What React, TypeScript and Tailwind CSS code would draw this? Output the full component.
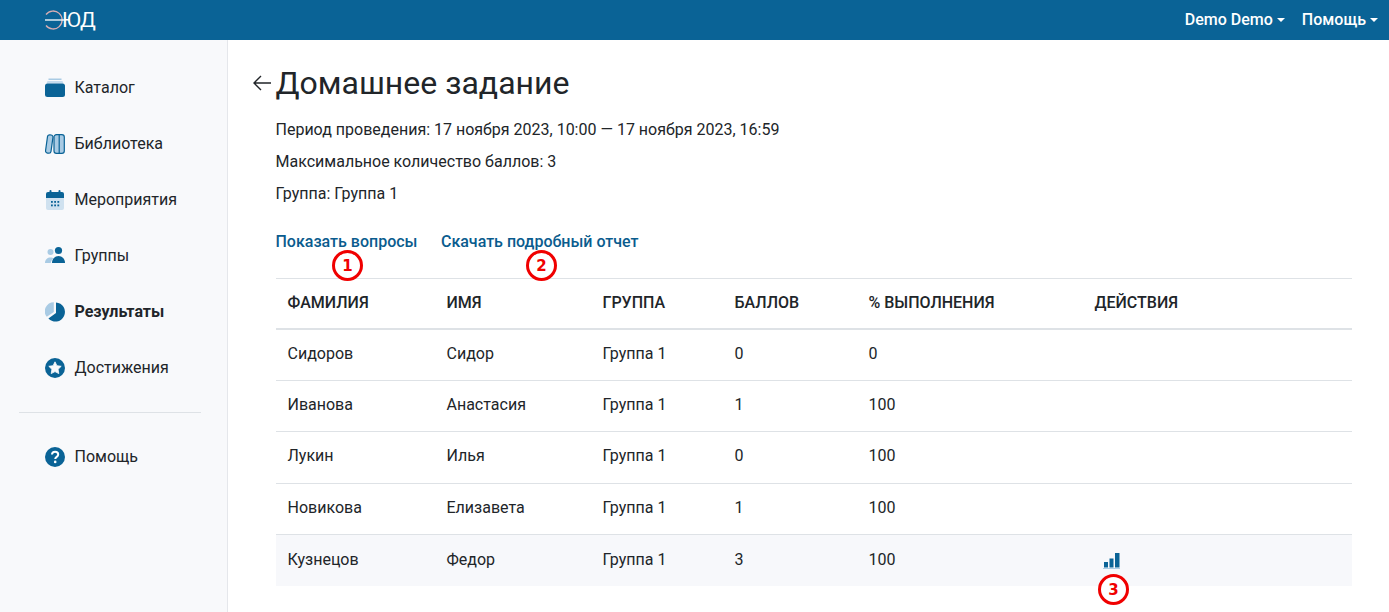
import React from "react";

const blue = "#0a6396";
const light = "#a9cbe4";

const Catalog = () => (
  <svg width="20" height="20" viewBox="0 0 20 20">
    <rect x="3.5" y="0.5" width="13" height="1.5" fill={light} />
    <path d="M2.5 3h15l1 2.5h-17z" fill="#c5dcee" />
    <rect x="0" y="5.5" width="20" height="13.5" rx="2.5" fill={blue} />
  </svg>
);
const Library = () => (
  <svg width="20" height="20" viewBox="0 0 20 20">
    <rect x="1.5" y="0.8" width="5.5" height="18.4" rx="2.2" transform="rotate(8 4.2 10)" fill={light} stroke={blue} strokeWidth="1.2" />
    <rect x="9" y="0.7" width="10.3" height="18.6" rx="2.4" fill={light} stroke={blue} strokeWidth="1.2" />
    <rect x="13.6" y="0.7" width="1.2" height="18.6" fill={blue} />
  </svg>
);
const Calendar = () => (
  <svg width="20" height="20" viewBox="0 0 20 20">
    <rect x="1" y="5" width="18" height="15" rx="2" fill="#cfe1ef" />
    <path d="M1 8V4a2 2 0 0 1 2-2h14a2 2 0 0 1 2 2v4z" fill={blue} />
    <rect x="4.5" y="0" width="2" height="3.5" rx="1" fill={blue} />
    <rect x="13.5" y="0" width="2" height="3.5" rx="1" fill={blue} />
    {[6, 9.2, 12.4].map((x) =>
      [11, 14.5].map((y) => <rect key={`${x}-${y}`} x={x} y={y} width="1.8" height="1.8" fill={blue} />),
    )}
  </svg>
);
const Groups = () => (
  <svg width="20" height="20" viewBox="0 0 20 20">
    <circle cx="5.5" cy="6" r="3" fill={light} />
    <path d="M0 17c0-3.5 2.5-5.5 5.5-5.5 1.5 0 2.5.4 3 1-1.5 1-2.5 2.5-2.7 4.5z" fill={light} />
    <circle cx="13.5" cy="4.5" r="3.6" fill={blue} />
    <path d="M7 17c0-4 2.8-7 6.5-7s6.5 3 6.5 7z" fill={blue} />
  </svg>
);
const Results = () => (
  <svg width="20" height="20" viewBox="0 0 20 20">
    <path d="M8.8 0.2A9 9 0 0 0 1.8 14.8L8.8 10z" fill={light} />
    <path d="M11 0.4A9.6 9.6 0 1 1 3.4 16.6L11 11z" fill={blue} />
  </svg>
);
const Achievements = () => (
  <svg width="20" height="20" viewBox="0 0 20 20">
    <circle cx="10" cy="10" r="10" fill={blue} />
    <path d="M10 3.8l1.9 3.9 4.3.6-3.1 3 .7 4.3-3.8-2-3.8 2 .7-4.3-3.1-3 4.3-.6z" fill="#f8f9fb" stroke="#f8f9fb" strokeWidth="0.8" strokeLinejoin="round" />
  </svg>
);
const Help = () => (
  <svg width="20" height="20" viewBox="0 0 20 20">
    <circle cx="10" cy="10" r="10" fill={blue} />
    <path d="M7 7.6C7 5.8 8.4 4.8 10.1 4.8c1.8 0 3.1 1.1 3.1 2.7 0 2.4-3 2.3-3 4.6" fill="none" stroke="#fff" strokeWidth="2" />
    <circle cx="10.2" cy="14.9" r="1.3" fill="#fff" />
  </svg>
);

const nav = [
  { label: "Каталог", icon: <Catalog /> },
  { label: "Библиотека", icon: <Library /> },
  { label: "Мероприятия", icon: <Calendar /> },
  { label: "Группы", icon: <Groups /> },
  { label: "Результаты", icon: <Results />, active: true },
  { label: "Достижения", icon: <Achievements /> },
];

const rows = [
  ["Сидоров", "Сидор", "Группа 1", "0", "0"],
  ["Иванова", "Анастасия", "Группа 1", "1", "100"],
  ["Лукин", "Илья", "Группа 1", "0", "100"],
  ["Новикова", "Елизавета", "Группа 1", "1", "100"],
  ["Кузнецов", "Федор", "Группа 1", "3", "100"],
];

const NavItem = ({ label, icon, active }: { label: string; icon: React.ReactNode; active?: boolean }) => (
  <div className="flex h-[56px] items-center gap-[9.5px] pl-[45px]">
    <span className="flex h-5 w-5 shrink-0">{icon}</span>
    <span className={active ? "font-bold" : ""}>{label}</span>
  </div>
);

const Marker = ({ n, className }: { n: number; className: string }) => (
  <span
    className={`absolute flex h-[31px] w-[31px] items-center justify-center rounded-full border-[3px] border-[#f00000] bg-white font-['DejaVu_Sans',sans-serif] text-[15px] font-bold text-[#f00000] ${className}`}
  >
    {n}
  </span>
);

const Caret = () => (
  <span className="ml-[4px] inline-block border-x-[4px] border-t-[4px] border-x-transparent border-t-white align-[3px]" />
);

export default function App() {
  return (
    <div className="relative h-[612px] overflow-hidden bg-white font-['Roboto',sans-serif] text-[16px] leading-[24px] text-[#212529]">
      <header className="flex h-10 items-center justify-between bg-[#0a6396] pl-[44px] pr-[11px] text-white">
        <div className="flex items-center">
          <svg width="22" height="20" viewBox="0 0 22 20" className="-mr-[4px]">
            <path d="M2 4.5A9 9 0 1 1 2 15.5" fill="none" stroke="#d9aeb3" strokeWidth="1.3" />
            <path d="M1 10h20" stroke="#fff" strokeWidth="1.3" />
          </svg>
          <span className="text-[21px] leading-none tracking-[-0.5px]">ЮД</span>
        </div>
        <div className="flex items-center gap-[17px] font-medium">
          <span>
            Demo Demo
            <Caret />
          </span>
          <span>
            Помощь
            <Caret />
          </span>
        </div>
      </header>
      <div className="flex h-[572px]">
        <aside className="w-[228px] shrink-0 border-r border-[#e5e7eb] bg-[#f8f9fb] pt-[20px]">
          {nav.map((n) => (
            <NavItem key={n.label} {...n} />
          ))}
          <div className="mb-[16px] ml-[19px] mt-[16px] h-px w-[182px] bg-[#dee2e6]" />
          <NavItem label="Помощь" icon={<Help />} />
        </aside>
        <main className="relative flex-1 pl-[47.5px] pr-[37px] pt-[24px]">
          <h1 className="relative text-[32px] leading-[38px]">
            <span className="absolute -left-[24px] top-[2px] text-[24px] font-normal">
              <svg width="20" height="34" viewBox="0 0 20 34">
                <path d="M19 17H2M9 10l-7 7 7 7" fill="none" stroke="#212529" strokeWidth="1.4" />
              </svg>
            </span>
            Домашнее задание
          </h1>
          <div className="mt-[16px] flex flex-col gap-[8px]">
            <p>Период проведения: 17 ноября 2023, 10:00 — 17 ноября 2023, 16:59</p>
            <p>Максимальное количество баллов: 3</p>
            <p>Группа: Группа 1</p>
          </div>
          <div className="mt-[24px] flex gap-[23.5px] font-medium text-[#0a5c8e]">
            <a>Показать вопросы</a>
            <a>Скачать подробный отчет</a>
          </div>
          <table className="mt-[24px] w-full table-fixed border-collapse">
            <colgroup>
              <col className="w-[159px]" />
              <col className="w-[156px]" />
              <col className="w-[132px]" />
              <col className="w-[134px]" />
              <col className="w-[226px]" />
              <col />
            </colgroup>
            <thead>
              <tr className="h-[50px] border-y border-b-2 border-[#dee2e6] text-left">
                {["ФАМИЛИЯ", "ИМЯ", "ГРУППА", "БАЛЛОВ", "% ВЫПОЛНЕНИЯ", "ДЕЙСТВИЯ"].map((h) => (
                  <th key={h} className="px-[12px] font-medium">
                    {h}
                  </th>
                ))}
              </tr>
            </thead>
            <tbody>
              {rows.map((r, i) => (
                <tr key={r[0]} className={`h-[51.5px] ${i === 4 ? "bg-[#f7f8fb]" : "border-b border-[#dee2e6]"}`}>
                  {r.map((c, j) => (
                    <td key={j} className="px-[12px] pb-[2px]">
                      {c}
                    </td>
                  ))}
                  <td className="px-[12px]">
                    {i === 4 && (
                      <svg width="17" height="16" viewBox="0 0 17 16" className="ml-[8px] block">
                        <rect x="1" y="9" width="4" height="5.5" fill={blue} />
                        <rect x="6.5" y="5.5" width="4" height="9" fill={blue} />
                        <rect x="12" y="0" width="4.5" height="14.5" fill={blue} />
                        <rect x="0" y="15" width="17" height="1" fill={light} />
                      </svg>
                    )}
                  </td>
                </tr>
              ))}
            </tbody>
          </table>
          <Marker n={1} className="left-[104px] top-[210px]" />
          <Marker n={2} className="left-[298px] top-[210px]" />
          <Marker n={3} className="left-[870px] top-[534px]" />
        </main>
      </div>
    </div>
  );
}
